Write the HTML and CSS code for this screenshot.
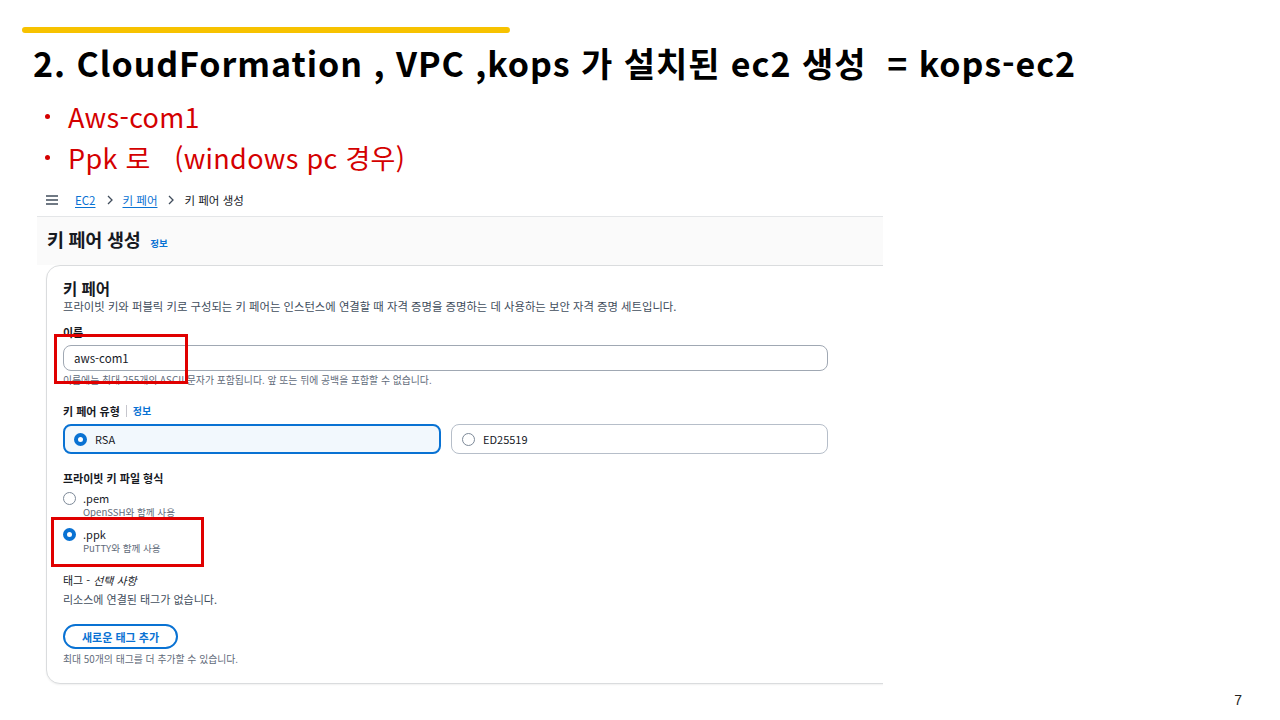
FILE: index.html
```html
<!DOCTYPE html>
<html lang="ko">
<head>
<meta charset="utf-8">
<title>kops-ec2</title>
<link rel="stylesheet" href="styles.css">
</head>
<body>
<div class="slide">
  <div class="accent-bar"></div>
  <h1 class="title">2. CloudFormation , VPC ,kops 가 설치된 ec2 생성 &nbsp;= kops-ec2</h1>
  <ul class="bullets">
    <li>Aws-com1</li>
    <li>Ppk 로 &nbsp; (windows pc 경우)</li>
  </ul>

  <div class="shot">
    <div class="crumbs">
      <svg class="burger" width="12" height="10" viewBox="0 0 12 10"><path d="M0 1h12M0 5h12M0 9h12" stroke="#414d5c" stroke-width="1.6"/></svg>
      <a class="crumb-link">EC2</a>
      <svg class="chev" width="8" height="10" viewBox="0 0 8 10"><path d="M2 1l4 4-4 4" fill="none" stroke="#414d5c" stroke-width="1.3"/></svg>
      <a class="crumb-link">키 페어</a>
      <svg class="chev" width="8" height="10" viewBox="0 0 8 10"><path d="M2 1l4 4-4 4" fill="none" stroke="#414d5c" stroke-width="1.3"/></svg>
      <span class="crumb-cur">키 페어 생성</span>
    </div>
    <div class="page-head">
      <h2 class="page-title">키 페어 생성 <span class="info">정보</span></h2>
    </div>
    <div class="card">
      <div class="card-title">키 페어</div>
      <div class="desc">프라이빗 키와 퍼블릭 키로 구성되는 키 페어는 인스턴스에 연결할 때 자격 증명을 증명하는 데 사용하는 보안 자격 증명 세트입니다.</div>

      <div class="label lbl-name">이름</div>
      <div class="input">aws-com1</div>
      <div class="hint">이름에는 최대 255개의 ASCII 문자가 포함됩니다. 앞 또는 뒤에 공백을 포함할 수 없습니다.</div>

      <div class="label lbl-type">키 페어 유형 <span class="sep"></span><span class="info">정보</span></div>
      <div class="tiles">
        <div class="tile tile-on"><span class="radio radio-on"></span>RSA</div>
        <div class="tile"><span class="radio"></span>ED25519</div>
      </div>

      <div class="label lbl-fmt">프라이빗 키 파일 형식</div>
      <div class="opt opt-pem">
        <span class="radio"></span>
        <div class="opt-text"><div class="opt-main">.pem</div><div class="opt-sub">OpenSSH와 함께 사용</div></div>
      </div>
      <div class="opt opt-ppk">
        <span class="radio radio-on"></span>
        <div class="opt-text"><div class="opt-main">.ppk</div><div class="opt-sub">PuTTY와 함께 사용</div></div>
      </div>

      <div class="label lbl-tag">태그 - <i>선택 사항</i></div>
      <div class="plain">리소스에 연결된 태그가 없습니다.</div>
      <div class="btn">새로운 태그 추가</div>
      <div class="hint hint-tag">최대 50개의 태그를 더 추가할 수 있습니다.</div>
    </div>

    <div class="mark mark-name"></div>
    <div class="mark mark-ppk"></div>
  </div>

  <div class="footer">7</div>
</div>
</body>
</html>
```

FILE: styles.css
```css
html, body {
  margin: 0;
  padding: 0;
  background: #ffffff;
}
.slide {
  width: 1280px;
  height: 720px;
  overflow: hidden;
  display: flex;
  flex-direction: column;
  font-family: "Noto Sans CJK KR", "Noto Sans", sans-serif;
  color: #000;
}
.accent-bar {
  margin: 27px 0 0 22px;
  width: 488px;
  height: 6px;
  border-radius: 3px;
  background: #f7c200;
}
.title {
  margin: 8px 0 0 33px;
  font-size: 34px;
  line-height: 44px;
  font-weight: 700;
  letter-spacing: 0.95px;
  white-space: nowrap;
}
.bullets {
  list-style: none;
  margin: 11px 0 0 0;
  padding: 0 0 0 45px;
  color: #d40000;
  font-size: 27px;
  line-height: 41px;
  font-weight: 400;
  letter-spacing: 0.3px;
}
.bullets li {
  display: flex;
  align-items: center;
  white-space: pre;
}
.bullets li::before {
  content: "";
  width: 5px;
  height: 5px;
  border-radius: 50%;
  background: #d40000;
  margin-right: 18px;
}

/* screenshot */
.shot {
  position: relative;
  margin: 7px 0 0 37px;
  width: 846px;
  height: 505px;
  overflow: hidden;
  font-family: "Noto Sans CJK KR", "Noto Sans", sans-serif;
  color: #16191f;
}
.crumbs {
  display: flex;
  align-items: center;
  height: 20px;
  margin: 5px 0 0 9px;
  font-size: 11.5px;
}
.burger { margin-right: 17px; }
.chev { margin: 0 9px 0 10px; }
.crumb-link {
  color: #0972d3;
  text-decoration: underline;
  text-underline-offset: 2px;
}
.crumb-cur { color: #16191f; }

.page-head {
  margin-top: 6px;
  border-top: 1px solid #e4e6e8;
  background: #fafafa;
  height: 49px;
  padding-left: 10px;
  box-sizing: border-box;
  padding-top: 10px;
}
.page-title {
  margin: 0;
  font-size: 18.5px;
  line-height: 24px;
  font-weight: 700;
  letter-spacing: -0.3px;
}
.info {
  color: #0972d3;
  font-size: 9.5px;
  font-weight: 700;
  letter-spacing: 0;
  margin-left: 5px;
}

.card {
  margin-left: 9px;
  width: 900px;
  border: 1px solid #dadcde;
  border-radius: 14px;
  padding: 12px 0 17px 16px;
  box-sizing: border-box;
  background: #fff;
  box-shadow: 0 1px 2px rgba(0,0,0,0.06);
}
.card-title {
  font-size: 15.5px;
  line-height: 20px;
  font-weight: 700;
}
.desc {
  font-size: 11.35px;
  line-height: 16px;
  color: #414d5c;
  white-space: nowrap;
}
.label {
  font-size: 11px;
  line-height: 16px;
  font-weight: 700;
  color: #16191f;
  display: flex;
  align-items: center;
}
.label i { font-weight: 400; font-style: italic; margin-left: 3px; }
.lbl-name { margin-top: 10px; }
.lbl-type { margin-top: 16px; }
.lbl-fmt { margin-top: 16px; }
.lbl-tag { margin-top: 17px; font-weight: 400; }
.sep {
  display: inline-block;
  width: 1px;
  height: 12px;
  background: #c6c6cd;
  margin: 0 6px 0 6px;
}
.lbl-type .info { font-size: 10px; margin-left: 0; }

.input {
  margin-top: 5px;
  width: 765px;
  height: 26px;
  box-sizing: border-box;
  border: 1px solid #a0a8b3;
  border-radius: 8px;
  padding-left: 10px;
  font-size: 11.5px;
  line-height: 24px;
  color: #16191f;
}
.hint {
  margin-top: 2px;
  font-size: 9.85px;
  line-height: 14px;
  color: #5f6b7a;
  white-space: nowrap;
}
.tiles {
  margin-top: 5px;
  display: flex;
  gap: 10px;
  width: 765px;
}
.tile {
  flex: 1;
  height: 30px;
  box-sizing: border-box;
  border: 1px solid #b6bec9;
  border-radius: 8px;
  display: flex;
  align-items: center;
  padding-left: 10px;
  font-size: 11px;
}
.tile-on {
  border: 2px solid #0972d3;
  background: #f2f8fd;
  padding-left: 9px;
}
.radio {
  width: 13px;
  height: 13px;
  box-sizing: border-box;
  border-radius: 50%;
  border: 1.3px solid #7d8998;
  background: #fff;
  margin-right: 8px;
  flex: none;
}
.radio-on {
  border: 4px solid #0972d3;
}
.opt {
  display: flex;
  align-items: flex-start;
}
.opt .radio { margin-top: 1px; margin-right: 7px; }
.opt-pem { margin-top: 5px; }
.opt-ppk { margin-top: 8px; }
.opt-main {
  font-size: 11px;
  line-height: 14px;
}
.opt-sub {
  font-size: 9.6px;
  line-height: 14px;
  color: #5f6b7a;
}
.plain {
  margin-top: 3px;
  font-size: 11px;
  line-height: 16px;
  color: #414d5c;
}
.btn {
  margin-top: 17px;
  width: 115px;
  height: 25px;
  box-sizing: border-box;
  border: 2px solid #0972d3;
  border-radius: 13px;
  color: #0972d3;
  font-weight: 700;
  font-size: 11px;
  display: flex;
  align-items: center;
  justify-content: center;
}
.hint-tag { margin-top: 3px; }

.mark {
  position: absolute;
  border: 3.5px solid #e00000;
  box-sizing: border-box;
}
.mark-name { left: 17px; top: 149px; width: 134px; height: 50px; }
.mark-ppk { left: 14px; top: 332px; width: 153px; height: 50px; }

.footer {
  margin: 1px 38px 0 0;
  text-align: right;
  font-family: "Liberation Sans", Arial, sans-serif;
  font-size: 14px;
  line-height: 18px;
  color: #222;
}
```
